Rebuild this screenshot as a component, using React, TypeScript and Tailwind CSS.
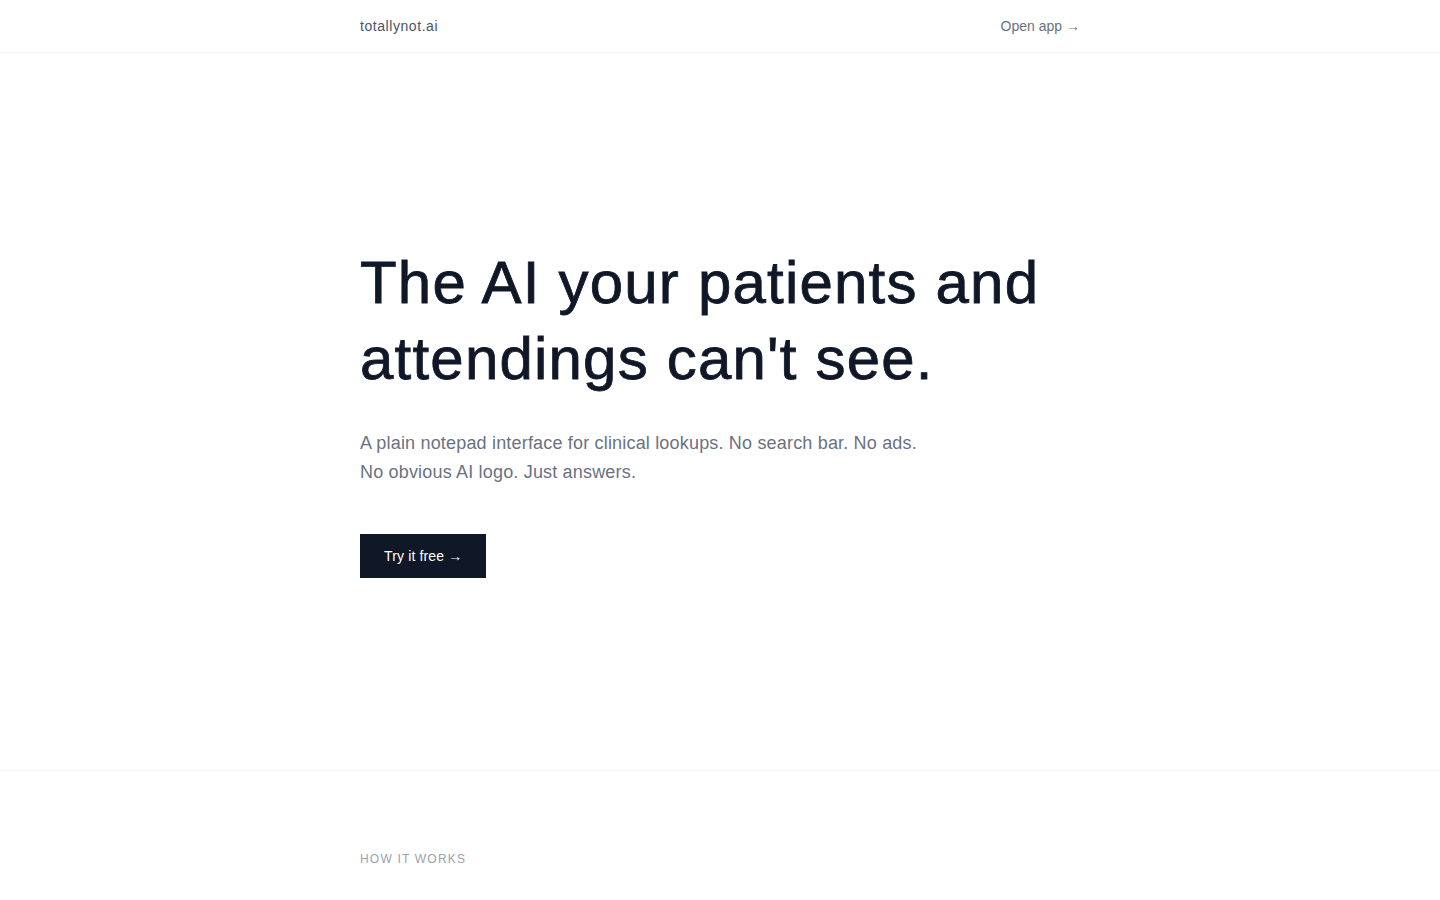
export default function App() {
  return (
    <div className="min-h-screen bg-white text-gray-900" style={{ fontFamily: '"Liberation Sans", Arial, sans-serif' }}>
      <header className="border-b border-gray-100">
        <div className="mx-auto flex max-w-[720px] items-center justify-between py-4">
          <a className="text-sm font-medium tracking-[0.04em] text-gray-600">totallynot.ai</a>
          <a className="text-sm text-gray-500">Open app →</a>
        </div>
      </header>

      <section className="border-b border-gray-100">
        <div className="mx-auto max-w-[720px] py-48">
          <h1 className="text-6xl font-medium leading-[1.27] tracking-[0.02em] text-gray-900 [-webkit-text-stroke:0.8px_#111827]">
            The AI your patients and attendings can't see.
          </h1>
          <p className="mt-8 max-w-[565px] text-lg leading-[29px] tracking-[0.01em] text-gray-500">
            A plain notepad interface for clinical lookups. No search bar. No ads. No obvious AI logo. Just answers.
          </p>
          <button className="mt-[47px] bg-gray-900 px-6 py-3 text-sm tracking-[0.01em] text-white">Try it free →</button>
        </div>
      </section>

      <section>
        <div className="mx-auto max-w-[720px] py-20">
          <p className="text-xs uppercase tracking-widest text-gray-400">How it works</p>
        </div>
      </section>
    </div>
  );
}
